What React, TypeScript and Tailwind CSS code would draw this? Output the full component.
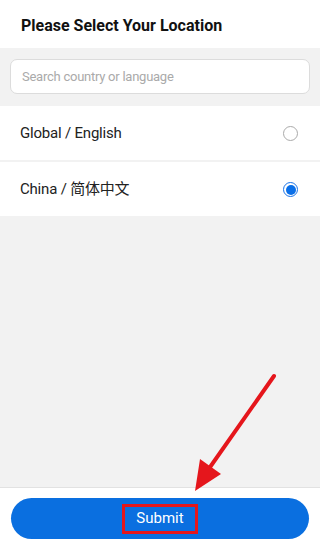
import React from 'react';

const options = [
  { label: 'Global / English', selected: false },
  { label: 'China / 简体中文', selected: true },
];

function Radio({ selected }: { selected: boolean }) {
  if (selected) {
    return (
      <span className="flex h-[15px] w-[15px] items-center justify-center rounded-full border-[1.5px] border-[#1a73e8] bg-white">
        <span className="h-[10px] w-[10px] rounded-full bg-[#0a6fe8]" />
      </span>
    );
  }
  return <span className="h-[15px] w-[15px] rounded-full border-[1.5px] border-[#aaaaaa] bg-white" />;
}

export default function App() {
  return (
    <div
      className="relative flex h-[550px] w-[320px] flex-col overflow-hidden bg-[#f2f2f2]"
      style={{ fontFamily: 'Roboto, "Noto Sans CJK SC", sans-serif' }}
    >
      <header className="flex h-[48px] items-center bg-white px-[21px] pt-[4px]">
        <h1 className="text-[16px] font-bold text-[#111]">Please Select Your Location</h1>
      </header>

      <div className="px-[10px] pb-[12px] pt-[11px]">
        <div className="flex h-[35px] items-center rounded-[7px] border border-[#dcdcdc] bg-white px-[11px] pt-[1px]">
          <span className="text-[13px] tracking-[-0.25px] text-[#aaaaaa]">Search country or language</span>
        </div>
      </div>

      <ul className="flex flex-col gap-[2px]">
        {options.map((o) => (
          <li key={o.label} className="flex h-[54px] items-center justify-between bg-white pl-[20px] pr-[22px] pt-[1px]">
            <span className="text-[15px] tracking-[-0.2px] text-[#222]">{o.label}</span>
            <Radio selected={o.selected} />
          </li>
        ))}
      </ul>

      <div className="flex-1" />

      <footer className="border-t border-[#e2e2e2] bg-white px-[11px] pb-[11px] pt-[10px]">
        <button className="flex h-[41px] w-full items-center justify-center rounded-full bg-[#0a6fe0]">
          <span className="flex h-[30px] w-[76px] items-center justify-center border-[3px] border-[#e5161c] text-[15px] text-white">
            Submit
          </span>
        </button>
      </footer>

      {/* annotation arrow */}
      <svg className="pointer-events-none absolute left-0 top-0" width="320" height="550" viewBox="0 0 320 550">
        <line x1="274" y1="376" x2="208" y2="470" stroke="#e5161c" strokeWidth="4" strokeLinecap="round" />
        <polygon points="195,491 200,459 221,474" fill="#e5161c" />
      </svg>
    </div>
  );
}
